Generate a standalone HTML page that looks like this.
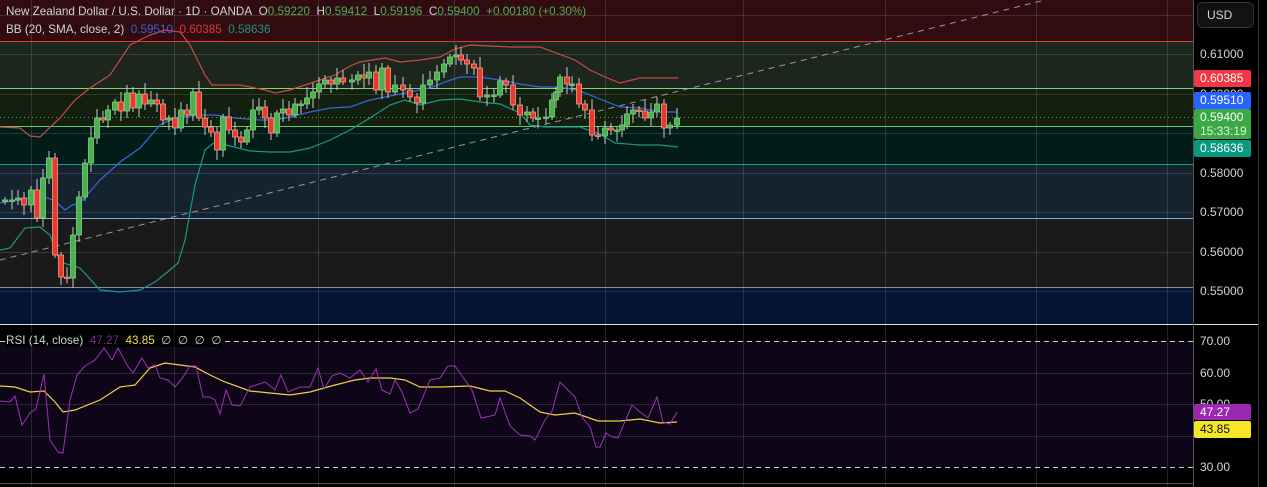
<!DOCTYPE html>
<html><head><meta charset="utf-8"><style>
body{margin:0;width:1267px;height:487px;background:#000;overflow:hidden;font-family:"Liberation Sans",sans-serif;}
#w{position:relative;width:1267px;height:487px;}
.t{position:absolute;font-size:11.7px;color:#d1d4dc;white-space:nowrap;}
.ax{position:absolute;left:1200px;font-size:12px;color:#d1d4dc;}
.bx{position:absolute;left:1194px;width:57px;font-size:12px;color:#fff;padding-left:6px;box-sizing:border-box;border-radius:2px;}
</style></head><body><div id="w">
<svg id="s" width="1267" height="487" style="position:absolute;left:0;top:0">
<rect x="0" y="0" width="1193" height="41" fill="#300c10"/>
<rect x="0" y="41" width="1193" height="47" fill="#1c261c"/>
<rect x="0" y="88" width="1193" height="38" fill="#13200f"/>
<rect x="0" y="126" width="1193" height="38" fill="#021c18"/>
<rect x="0" y="164" width="1193" height="54" fill="#15232f"/>
<rect x="0" y="218" width="1193" height="69" fill="#1a1a1a"/>
<rect x="0" y="287" width="1193" height="37" fill="#061433"/>
<rect x="0" y="341" width="1193" height="126" fill="#0f0519"/>
<g stroke="#ffffff" stroke-opacity="0.13" stroke-width="1">
<path d="M31.5 0V487M174.5 0V487M318.5 0V487M454.5 0V487M605.5 0V487M743.5 0V487M885.5 0V487M1036.5 0V487M1167.5 0V487"/>
<path d="M0 15.5H1193M0 54.5H1193M0 94.5H1193M0 133.5H1193M0 173.5H1193M0 212.5H1193M0 252.5H1193M0 291.5H1193M0 373.5H1193M0 404.5H1193M0 436.5H1193"/>
</g>
<path d="M0 41.5H1193" stroke="#e0353a"/>
<path d="M0 88.5H1193" stroke="#80d080"/>
<path d="M0 117.5H1193" stroke="#4caf50" stroke-dasharray="1 3"/>
<path d="M0 126.5H1193" stroke="#6cc46c"/>
<path d="M0 164.5H1193" stroke="#1a9a88"/>
<path d="M0 218.5H1193" stroke="#7ab0e0"/>
<path d="M0 287.5H1193" stroke="#8a8aa0"/>
<path d="M0 324.5H1258" stroke="#e0e0e0"/>
<path d="M0 341.5H1193M0 467.5H1193" stroke="#cfcfcf" stroke-dasharray="5 4"/>
<path d="M0 483.5H1193" stroke="#555"/>
<path d="M1193.5 0V487" stroke="#555"/>
<path d="M1258.5 0V487" stroke="#333"/>
<path d="M0 260L1045 0" stroke="#9a9a9a" stroke-dasharray="6 5" fill="none"/>
<g fill="none" stroke-width="1.2">
<polyline stroke="#c94a4a" points="0,127 20,128 30,136 40,137 45,132 60,118 75,100 90,88 110,75 120,60 130,45 150,35 165,30 180,32 190,45 205,75 212,85 240,85 265,90 275,93 290,90 305,85 320,80 335,75 350,66 360,62 385,58 400,62 420,60 440,57 455,49 470,45 490,46 510,47 540,47 575,60 590,70 605,77 620,83 640,78 660,78 678,78"/>
<polyline stroke="#3468e0" points="0,203 30,198 45,197 55,201 65,210 72,205 80,203 100,180 120,162 140,148 160,125 175,118 190,116 200,115 215,115 235,118 260,120 275,120 290,117 310,112 330,108 350,107 370,100 390,96 410,92 430,88 445,82 460,77 480,77 500,80 520,84 540,87 560,87 580,91 600,99 620,107 640,108 660,112 678,112"/>
<polyline stroke="#1a9880" points="0,250 10,248 25,228 40,227 50,235 60,262 80,268 100,290 120,292 140,290 155,282 170,270 178,263 185,240 195,185 205,150 215,142 230,146 250,151 270,152 290,152 310,148 330,140 350,130 370,118 390,105 405,100 420,105 440,100 460,99 480,102 500,104 520,113 530,125 545,127 560,127 580,127 600,134 615,143 640,145 660,145 678,147"/>
<polyline stroke="#f0d040" points="0,386 15,387 30,392 44,391 55,402 63,412 75,410 100,400 120,387 135,385 150,368 165,363 180,365 195,367 210,375 225,382 250,391 270,393 290,395 310,392 335,385 355,380 370,378 390,378 405,380 420,387 440,387 470,386 490,391 505,391 520,398 540,412 555,415 575,413 598,421 620,421 640,419 660,423 677,422"/>
<polyline stroke="#9a35b0" stroke-width="1" points="0,401 10,402 15,396 22,425 30,413 36,409 44,374 50,440 58,452 63,453 70,400 77,375 85,366 95,360 104,348 112,360 118,348 127,365 133,373 142,358 148,368 155,365 160,378 168,380 175,387 183,377 190,366 196,366 203,397 210,397 215,400 220,414 226,390 232,405 240,406 250,387 265,382 275,390 281,375 288,392 300,387 310,387 318,368 324,389 332,376 340,373 350,378 360,370 368,382 376,369 382,390 390,394 395,380 402,392 410,413 418,409 430,380 440,378 448,366 455,366 462,376 472,390 481,418 486,417 495,415 500,398 510,426 520,435 530,436 535,440 545,420 552,411 560,382 566,388 575,397 582,417 590,427 596,447 600,447 606,433 612,437 618,438 632,405 640,412 648,418 657,397 663,422 670,424 677,412"/>
</g>
<g id="c"></g>
</svg>
<div class="t" style="left:6px;top:5px">New Zealand Dollar / U.S. Dollar · 1D · OANDA&nbsp; O<span style="color:#4caf50">0.59220</span>&nbsp; H<span style="color:#4caf50">0.59412</span>&nbsp; L<span style="color:#4caf50">0.59196</span>&nbsp; C<span style="color:#4caf50">0.59400</span>&nbsp; <span style="color:#4caf50">+0.00180 (+0.30%)</span></div>
<div class="t" style="left:6px;top:23px">BB (20, SMA, close, 2)&nbsp; <span style="color:#3a60d8">0.59510</span>&nbsp; <span style="color:#e0353a">0.60385</span>&nbsp; <span style="color:#1a9880">0.58636</span></div>
<div class="t" style="left:6px;top:333px;background:#000">RSI (14, close)&nbsp; <span style="color:#7a2a90">47.27</span>&nbsp; <span style="color:#f0e040">43.85</span>&nbsp; ∅&nbsp; ∅&nbsp; ∅&nbsp; ∅</div>
<div style="position:absolute;left:1197px;top:2px;width:57px;height:26px;border:1px solid #333;border-radius:5px;background:#121212;box-sizing:border-box;color:#d1d4dc;font-size:12px;line-height:24px;padding-left:9px">USD</div>
<div class="ax" style="top:47px">0.61000</div>
<div class="ax" style="top:87px">0.60000</div>
<div class="ax" style="top:166px">0.58000</div>
<div class="ax" style="top:205px">0.57000</div>
<div class="ax" style="top:245px">0.56000</div>
<div class="ax" style="top:284px">0.55000</div>
<div class="bx" style="top:70px;height:17px;line-height:17px;background:#f23645">0.60385</div>
<div class="bx" style="top:92px;height:17px;line-height:17px;background:#2962ff">0.59510</div>
<div class="bx" style="top:109px;height:30px;line-height:14px;padding-top:1px;background:#3aa845">0.59400<br><span style="color:#e0f0e0">15:33:19</span></div>
<div class="bx" style="top:140px;height:17px;line-height:17px;background:#089981">0.58636</div>
<div class="ax" style="top:334px">70.00</div>
<div class="ax" style="top:366px">60.00</div>
<div class="ax" style="top:397px">50.00</div>
<div class="ax" style="top:460px">30.00</div>
<div class="bx" style="top:404px;height:16px;line-height:16px;background:#9c27b0">47.27</div>
<div class="bx" style="top:421px;height:17px;line-height:17px;background:#f5e628;color:#111">43.85</div>
</div>
<script>
var d=[[5,200],[12,200],[18,198],[24,205],[31,190],[37,218],[43,178],[49,158],[55,255],[61,277],[67,278],[73,235],[79,197],[85,163],[91,138],[97,118],[103,120],[108,110],[115,102],[121,111],[127,93],[133,108],[139,94],[145,104],[151,100],[157,104],[163,120],[169,118],[175,128],[181,110],[187,115],[193,92],[199,118],[205,127],[211,132],[217,150],[223,117],[229,130],[235,137],[241,142],[247,130],[253,110],[259,107],[265,118],[271,133],[277,113],[283,109],[289,115],[295,104],[301,104],[307,98],[313,92],[319,84],[325,80],[331,84],[337,78],[343,82],[352,80],[358,75],[364,78],[369,72],[376,90],[382,68],[388,92],[395,85],[403,90],[410,97],[417,103],[423,85],[430,80],[437,72],[444,64],[450,57],[456,55],[461,60],[467,64],[474,68],[480,97],[487,95],[494,95],[500,81],[506,85],[513,105],[520,115],[527,112],[533,118],[538,118],[546,117],[552,100],[556,92],[560,77],[567,84],[572,84],[579,104],[585,110],[592,135],[598,136],[605,128],[611,130],[617,130],[622,125],[627,114],[633,110],[639,111],[645,118],[651,112],[657,104],[664,128],[670,125],[677,118]];
var g=document.getElementById('c'),h='',p=d[0][1];
for(var i=0;i<d.length;i++){var x=d[i][0],c=d[i][1],o=p,up=c<=o,t=Math.min(o,c),b=Math.max(o,c);if(b-t<1.5){b=t+1.5;}
var col=up?'#4caf50':'#e8392b',bd=up?'#7ad67a':'#f59a8a';var hi=t-3-(i*7%9),lo=b+3+(i*5%8);
h+='<line x1="'+x+'" x2="'+x+'" y1="'+hi+'" y2="'+lo+'" stroke="#c8c8c8" stroke-width="1"/>';
h+='<rect x="'+(x-2.5)+'" y="'+t+'" width="5" height="'+(b-t)+'" fill="'+col+'" stroke="'+bd+'" stroke-width="0.8"/>';p=c;}
g.innerHTML=h;
</script>
</body></html>
